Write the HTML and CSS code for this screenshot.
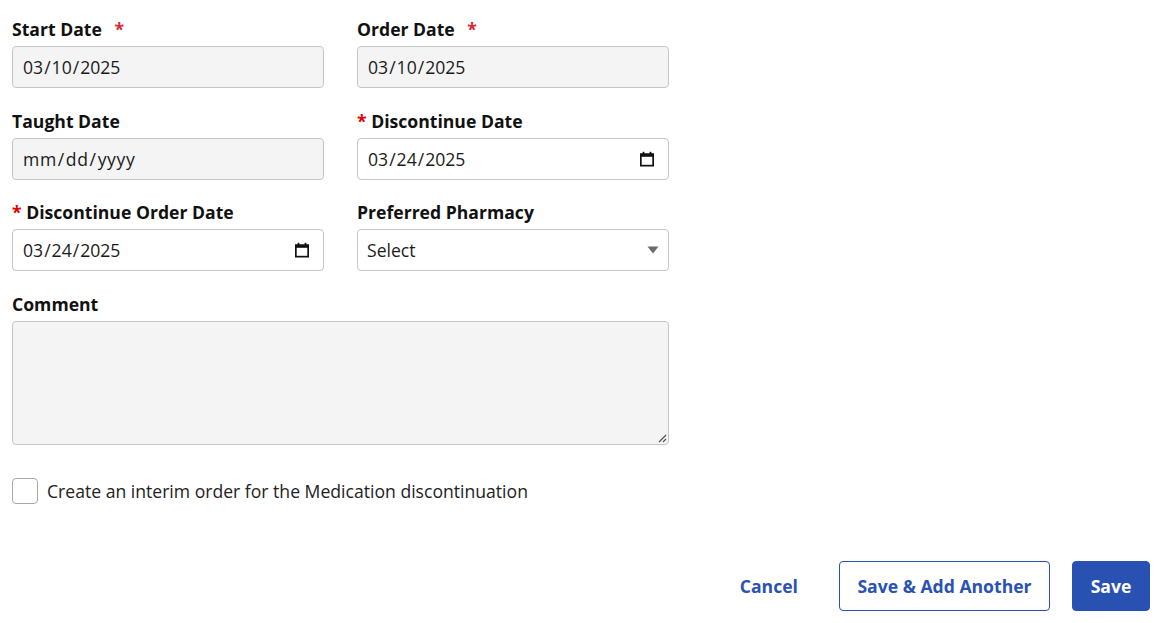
FILE: index.html
```html
<!DOCTYPE html>
<html lang="en">
<head>
<meta charset="utf-8">
<title>Discontinue Medication</title>
<link rel="stylesheet" href="styles.css">
</head>
<body>
<div class="form">
  <div class="grid">
    <div class="field">
      <div class="label">Start Date <span class="req-after">*</span></div>
      <div class="input disabled"><span class="date">03<i>/</i>10<i>/</i>2025</span></div>
    </div>
    <div class="field">
      <div class="label">Order Date <span class="req-after">*</span></div>
      <div class="input disabled"><span class="date">03<i>/</i>10<i>/</i>2025</span></div>
    </div>
    <div class="field">
      <div class="label">Taught Date</div>
      <div class="input disabled"><span class="date ph">mm<i>/</i>dd<i>/</i>yyyy</span></div>
    </div>
    <div class="field">
      <div class="label"><span class="req">*</span> Discontinue Date</div>
      <div class="input">
        <span class="date">03<i>/</i>24<i>/</i>2025</span>
        <svg class="cal" width="16" height="16" viewBox="0 0 16 16"><rect x="1.85" y="3.35" width="12.3" height="11.3" fill="none" stroke="#111" stroke-width="1.7"/><rect x="1" y="2.5" width="14" height="3.3" fill="#111"/><rect x="3.6" y="0.8" width="1.8" height="3" fill="#111"/><rect x="10.6" y="0.8" width="1.8" height="3" fill="#111"/></svg>
      </div>
    </div>
    <div class="field">
      <div class="label"><span class="req">*</span> Discontinue Order Date</div>
      <div class="input">
        <span class="date">03<i>/</i>24<i>/</i>2025</span>
        <svg class="cal" width="16" height="16" viewBox="0 0 16 16"><rect x="1.85" y="3.35" width="12.3" height="11.3" fill="none" stroke="#111" stroke-width="1.7"/><rect x="1" y="2.5" width="14" height="3.3" fill="#111"/><rect x="3.6" y="0.8" width="1.8" height="3" fill="#111"/><rect x="10.6" y="0.8" width="1.8" height="3" fill="#111"/></svg>
      </div>
    </div>
    <div class="field">
      <div class="label">Preferred Pharmacy</div>
      <div class="input select">
        <span>Select</span>
        <svg class="arrow" width="12" height="8" viewBox="0 0 12 8"><path d="M0.5 0.5h11L6 7.5z" fill="#6b6b6b"/></svg>
      </div>
    </div>
    <div class="field wide">
      <div class="label">Comment</div>
      <div class="textarea">
        <svg class="grip" width="10" height="10" viewBox="0 0 10 10"><path d="M9 2L2 9 M9 6L6 9" stroke="#555" stroke-width="1.3"/></svg>
      </div>
    </div>
  </div>
  <label class="check">
    <span class="box"></span>
    <span>Create an interim order for the Medication discontinuation</span>
  </label>
  <div class="actions">
    <button class="btn link">Cancel</button>
    <button class="btn outline">Save &amp; Add Another</button>
    <button class="btn primary">Save</button>
  </div>
</div>
</body>
</html>
```

FILE: styles.css
```css
html, body {
  margin: 0;
  padding: 0;
  background: #fff;
}
body {
  font-family: "Open Sans", "Noto Sans", sans-serif;
  color: #1b1b1b;
  font-size: 17.6px;
}
.form {
  padding: 17px 13px 0 12px;
}
.grid {
  display: grid;
  grid-template-columns: 312px 312px;
  column-gap: 33px;
  row-gap: 20.5px;
}
.field {
  display: flex;
  flex-direction: column;
}
.field.wide {
  grid-column: 1 / 3;
}
.label {
  font-weight: 700;
  height: 24px;
  line-height: 24px;
  margin-bottom: 5px;
  color: #111;
  white-space: nowrap;
}
.req-after {
  color: #d42a35;
  margin-left: 8px;
}
.req {
  color: #e00000;
}
.input {
  box-sizing: border-box;
  width: 312px;
  height: 42px;
  border: 1px solid #c6c6c6;
  border-radius: 4px;
  background: #fff;
  display: flex;
  align-items: center;
  justify-content: space-between;
  padding: 0 13px 0 10px;
  font-size: 17.6px;
  color: #1b1b1b;
}
.input.disabled {
  background: #f4f4f4;
}
.date i {
  font-style: normal;
  margin: 0 1px;
}
.date.ph {
  letter-spacing: 0.6px;
}
.input.select {
  padding: 0 9px 0 9px;
}
.textarea {
  box-sizing: border-box;
  height: 124px;
  border: 1px solid #c6c6c6;
  border-radius: 4px;
  background: #f4f4f4;
  width: 657px;
  position: relative;
}
.grip {
  position: absolute;
  right: 1px;
  bottom: 1px;
}
.check {
  display: flex;
  align-items: center;
  gap: 9px;
  margin-top: 33px;
  font-size: 17.6px;
  color: #222;
}
.box {
  box-sizing: border-box;
  width: 26px;
  height: 26px;
  border: 1px solid #a9a9a9;
  border-radius: 4px;
  background: #fff;
}
.actions {
  display: flex;
  justify-content: flex-end;
  align-items: center;
  margin-top: 57px;
}
.btn {
  font-family: "Open Sans", "Noto Sans", sans-serif;
  font-size: 17.6px;
  font-weight: 700;
  height: 50px;
  box-sizing: border-box;
  border-radius: 4px;
  cursor: pointer;
}
.btn.link {
  background: none;
  border: none;
  color: #2a52b1;
  padding: 0 20px;
  margin-right: 21px;
}
.btn.outline {
  background: #fff;
  border: 1px solid #2a52b1;
  color: #2a52b1;
  width: 211px;
  margin-right: 22px;
}
.btn.primary {
  background: #2851b1;
  border: 1px solid #2851b1;
  color: #fff;
  width: 78px;
}
```
